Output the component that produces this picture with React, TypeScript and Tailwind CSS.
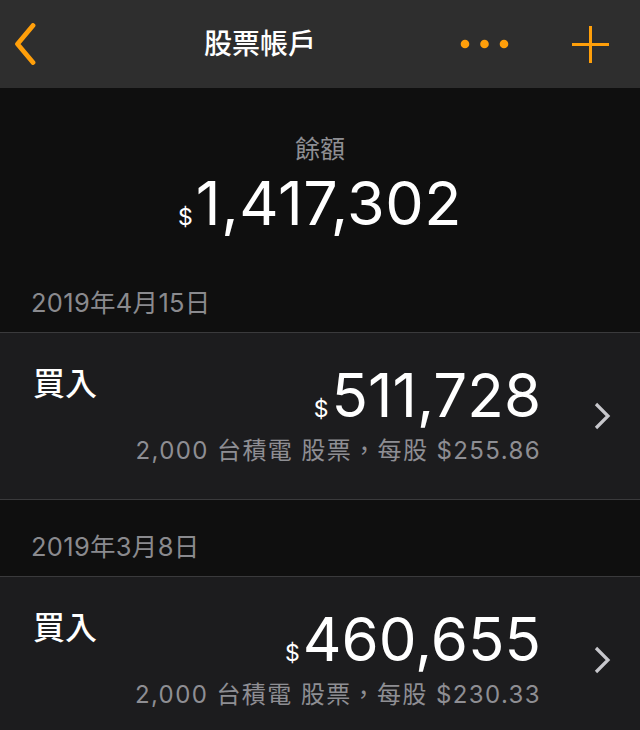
import React from "react";

const CJK = "font-['Inter','Noto_Sans_CJK_TC',sans-serif]";
const NUM = "font-['Inter','Noto_Sans_CJK_TC',sans-serif]";

function DateRow({ text, h }: { text: string; h: string }) {
  return (
    <div className={`${h} flex items-end pl-[31px] pb-[13px]`}>
      <span className={`${CJK} text-[25.5px] leading-[32px] tracking-[0.3px] text-[#8a8a8e]`}>{text}</span>
    </div>
  );
}

function Card({ amount, detail }: { amount: string; detail: string }) {
  return (
    <div className="h-[168px] bg-[#1c1c1e] border-y border-[#3a3a3c] flex">
      <div className={`${CJK} pl-[33px] pt-[31px] text-[32px] leading-[40px] font-medium text-white`}>買入</div>
      <div className="flex-1 flex flex-col items-end pt-[33px]">
        <div className="flex items-baseline text-white">
          <span className={`${NUM} text-[23px] mr-[3px]`}>$</span>
          <span className={`${NUM} text-[60px] leading-[59px]`}>{amount}</span>
        </div>
        <div className={`${CJK} mt-[9px] text-[24px] leading-[30px] tracking-[1.4px] text-[#8e8e93]`}>{detail}</div>
      </div>
      <div className="w-[99px] flex items-start justify-center pt-[68px] pl-[22px]">
        <svg width="20" height="30" viewBox="0 0 20 30">
          <polyline points="4,3 16,15 4,27" fill="none" stroke="#c7c7cc" strokeWidth="3.2" strokeLinecap="butt" strokeLinejoin="miter" />
        </svg>
      </div>
    </div>
  );
}

export default function App() {
  return (
    <div className="w-[640px] h-[730px] bg-[#0f0f0f] overflow-hidden">
      <header className="h-[88px] bg-[#2e2e2e] flex items-center">
        <svg className="ml-[14px]" width="22" height="42" viewBox="0 0 22 42">
          <polyline points="19,2.5 3.5,21 19,39.5" fill="none" stroke="#ff9f0a" strokeWidth="4.8" strokeLinecap="round" strokeLinejoin="round" />
        </svg>
        <div className={`${CJK} ml-[168px] text-[28px] leading-[36px] font-medium text-white`}>股票帳戶</div>
        <svg className="ml-auto" width="50" height="10" viewBox="0 0 50 10">
          <circle cx="5" cy="5" r="4.3" fill="#ff9f0a" />
          <circle cx="24.5" cy="5" r="4.3" fill="#ff9f0a" />
          <circle cx="44" cy="5" r="4.3" fill="#ff9f0a" />
        </svg>
        <svg className="ml-[62px] mr-[31px]" width="37" height="37" viewBox="0 0 37 37">
          <line x1="0" y1="18.5" x2="37" y2="18.5" stroke="#ff9f0a" strokeWidth="3" />
          <line x1="18.5" y1="0" x2="18.5" y2="37" stroke="#ff9f0a" strokeWidth="3" />
        </svg>
      </header>
      <section className="h-[182px] flex flex-col items-center pt-[45px]">
        <div className={`${CJK} text-[25px] leading-[32px] text-[#8e8e93]`}>餘額</div>
        <div className="mt-[8px] flex items-baseline text-white">
          <span className={`${NUM} text-[23px] mr-[3px]`}>$</span>
          <span className={`${NUM} text-[61px] leading-[60px] tracking-[0.5px]`}>1,417,302</span>
        </div>
      </section>
      <DateRow text="2019年4月15日" h="h-[62px]" />
      <Card amount="511,728" detail="2,000 台積電 股票，每股 $255.86" />
      <DateRow text="2019年3月8日" h="h-[76px]" />
      <Card amount="460,655" detail="2,000 台積電 股票，每股 $230.33" />
    </div>
  );
}
